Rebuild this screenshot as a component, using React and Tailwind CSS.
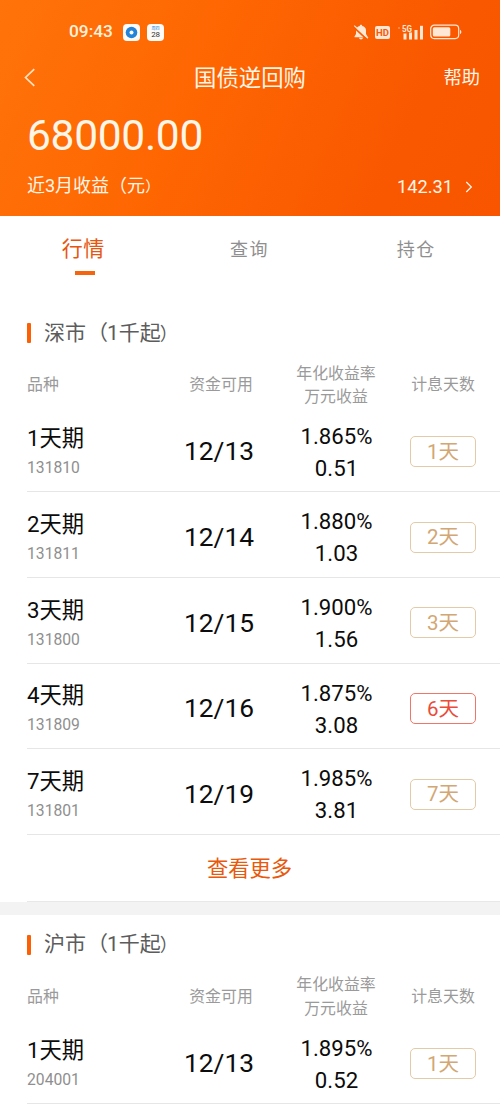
import React from "react";
import clsx from "clsx";

const shenzhen = [
  { term: "1天期", code: "131810", date: "12/13", rate: "1.865%", income: "0.51", days: "1天" },
  { term: "2天期", code: "131811", date: "12/14", rate: "1.880%", income: "1.03", days: "2天" },
  { term: "3天期", code: "131800", date: "12/15", rate: "1.900%", income: "1.56", days: "3天" },
  { term: "4天期", code: "131809", date: "12/16", rate: "1.875%", income: "3.08", days: "6天", hot: true },
  { term: "7天期", code: "131801", date: "12/19", rate: "1.985%", income: "3.81", days: "7天" },
];

const shanghai = [
  { term: "1天期", code: "204001", date: "12/13", rate: "1.895%", income: "0.52", days: "1天" },
];

const StatusBar = () => (
  <div className="flex h-[62px] items-center pl-[69px] pr-[38px] pt-[2px]">
    <span className="w-[54px] text-[17.3px] font-medium leading-none text-[#fff1dc]">09:43</span>
    <svg className="h-[17px] w-[17px]" viewBox="0 0 17 17">
      <rect width="17" height="17" rx="4" fill="#fdfaf7" />
      <circle cx="8.5" cy="8.5" r="5.8" fill="#2484d8" />
      <circle cx="8.5" cy="8.5" r="2" fill="#fff" />
    </svg>
    <div className="ml-[7px] flex h-[17px] w-[17px] flex-col items-center rounded-[4px] bg-[#fdfaf7] pt-[3px]">
      <span className="h-[4px] text-[4px] leading-[4px] text-[#2484d8]">周四</span>
      <span className="text-[8px] leading-[7px] tracking-tight text-[#333]">28</span>
    </div>
    <div className="ml-auto flex items-center text-[#ffe7d6]">
      <svg className="h-[16px] w-[16px]" viewBox="0 0 16 16" fill="currentColor">
        <path d="M8 .8c.8 0 1.200.5 1.200 1.200 2.300.6 3.800 2.100 3.800 4.300v3.700l1.500 2.400v.9H1.500v-.9L3 10V6.300c0-2.200 1.500-3.700 3.800-4.300C6.800 1.300 7.200.8 8 .8zM6 13.800h4c-.2 1-1 1.700-2 1.700s-1.800-.7-2-1.700z" />
        <path d="M.2 2.600 14 15.400" stroke="#fa5b00" strokeWidth="1.800" />
        <path d="M1.200 1.600 15 14.300" stroke="currentColor" strokeWidth="1.200" />
      </svg>
      <div className="ml-[6px] mt-[1px] flex h-[13px] w-[15px] items-center justify-center rounded-[2px] bg-[#ffe7d6] text-[9.500px] font-bold leading-none text-[#f45a08]">
        HD
      </div>
      <svg className="ml-[7px] h-[17px] w-[28px]" viewBox="0 0 28 17" fill="currentColor">
        <rect x="1" y="3" width="2" height="2" opacity=".3" />
        <text x="5" y="7.500" fontSize="8.500" fontWeight="700" textLength="10" lengthAdjust="spacingAndGlyphs" fontFamily="Roboto, sans-serif">
          5G
        </text>
        <rect x="6.500" y="9.500" width="3" height="6" />
        <rect x="12" y="8.500" width="3" height="7" />
        <rect x="17.500" y="6" width="3" height="9.500" />
        <rect x="23" y="1.800" width="3" height="13.700" />
      </svg>
      <svg className="ml-[5px] h-[16px] w-[32px]" viewBox="0 0 32 16" fill="none">
        <rect x=".7" y="1.200" width="28" height="13.400" rx="3.500" stroke="currentColor" strokeWidth="1.200" />
        <rect x="2.800" y="3.300" width="17.500" height="9.200" rx="1.500" fill="currentColor" />
        <path d="M30 5.800c1 .5 1.300 1.200 1.300 2.100S31 9.500 30 10z" fill="currentColor" />
      </svg>
    </div>
  </div>
);

const Header = () => (
  <header className="h-[216px] bg-[linear-gradient(115deg,#ff730a_0%,#fe6602_40%,#f95700_80%,#f95500_100%)] text-[#fff6e8]">
    <StatusBar />
    <div className="grid h-[32px] grid-cols-3 items-center pl-[24px] pr-[20px]">
      <svg className="-mt-[1px] h-[19px] w-[12px]" viewBox="0 0 12 20" fill="none" stroke="#ffe2c0" strokeWidth="1.800">
        <path d="M10.500 1.300 1.300 10l9.200 8.700" />
      </svg>
      <h1 className="-ml-[4px] whitespace-nowrap text-center text-[22.400px] leading-none">国债逆回购</h1>
      <span className="pt-[1px] text-right text-[18.300px] leading-none">帮助</span>
    </div>
    <div className="pl-[27px] pt-[18px] text-[42.500px] leading-[48px] tracking-[-0.300px]">68000.00</div>
    <div className="flex items-center justify-between pl-[27px] pr-[27px] pt-[12px] leading-[26px]">
      <span className="pt-[1px] text-[18px]">
        近3月收益（元<span className="text-[14.500px]">）</span>
      </span>
      <span className="flex items-center gap-[12px] text-[18.200px]">
        142.31
        <svg className="h-[12px] w-[8px]" viewBox="0 0 8 12" fill="none" stroke="currentColor" strokeWidth="1.300">
          <path d="m1.300 1 5 5-5 5" />
        </svg>
      </span>
    </div>
  </header>
);

const Tabs = () => (
  <nav className="grid h-[92.500px] grid-cols-3 text-center">
    <div className="flex flex-col items-center pt-[18px]">
      <span className="text-[21px] leading-[30px] tracking-[0.600px] text-[#e6560f]">行情</span>
      <span className="ml-[3px] mt-[7px] h-[4px] w-[20px] bg-[#f5640f]" />
    </div>
    <div className="-ml-[1px] pt-[19px] text-[18px] leading-[30px] tracking-[1.500px] text-[#8f8f8f]">查询</div>
    <div className="-ml-[1px] pt-[19px] text-[18px] leading-[30px] tracking-[1.500px] text-[#8f8f8f]">持仓</div>
  </nav>
);

const SectionHead = ({ market }) => (
  <>
    <div className="flex h-[48px] items-center pl-[27px]">
      <span className="mt-[1px] h-[20px] w-[4px] rounded-[1px] bg-[#fc5f04]" />
      <h2 className="ml-[13px] pt-[1px] text-[21px] leading-none text-[#5c5c5c]">
        {market}
        <span className="-mr-[1px] ml-[1px]">（</span>1千起<span className="-ml-[1px] text-[18px]">）</span>
      </h2>
    </div>
    <div className="grid h-[50px] grid-cols-[140px_108px_122px_92px] items-center pl-[27px] pt-[5px] text-center text-[15.900px] leading-[23.500px] text-[#9a9a9a]">
      <span className="text-left">品种</span>
      <span>资金可用</span>
      <span>
        年化收益率
        <br />
        万元收益
      </span>
      <span>计息天数</span>
    </div>
  </>
);

const Row = ({ item }) => (
  <div className="ml-[27px] grid h-[85.700px] grid-cols-[138px_108px_127px_86px] items-center border-b border-[#e6e6e6] text-center text-[#0c0c0c]">
    <div className="pt-[7px] text-left">
      <div className="text-[22.300px] leading-[32px]">{item.term}</div>
      <div className="text-[15.700px] leading-[28px] text-[#8f8f8f]">{item.code}</div>
    </div>
    <div className="pt-[5px] text-[26.300px] leading-[36px]">{item.date}</div>
    <div className="pt-[5.500px] text-[22.200px] leading-[32px]">
      <div>{item.rate}</div>
      <div>{item.income}</div>
    </div>
    <div className="flex justify-center pt-[5px]">
      <span
        className={clsx(
          "flex h-[31px] w-[66px] items-center justify-center rounded-[5px] border pt-[1px] text-[20.500px] leading-none",
          item.hot ? "border-[#ee7767] text-[#ea4c39]" : "border-[#e2cba6] text-[#d3a774]"
        )}
      >
        {item.days}
      </span>
    </div>
  </div>
);

const App = () => {
  return (
    <div className="h-[1111px] w-[500px] overflow-hidden bg-white font-['Roboto','Noto_Sans_CJK_SC',sans-serif]">
      <Header />
      <Tabs />
      <section>
        <SectionHead market="深市" />
        {shenzhen.map((item) => (
          <Row key={item.code} item={item} />
        ))}
        <div className="ml-[27px] flex h-[67px] items-center justify-center border-b border-[#e8e8e8] pr-[28px] pt-[2px] text-[21.300px] text-[#e8590c]">
          查看更多
        </div>
      </section>
      <div className="h-[13px] bg-[#f3f3f3]" />
      <section className="pt-[5.500px]">
        <SectionHead market="沪市" />
        {shanghai.map((item) => (
          <Row key={item.code} item={item} />
        ))}
      </section>
    </div>
  );
};

export default App;
